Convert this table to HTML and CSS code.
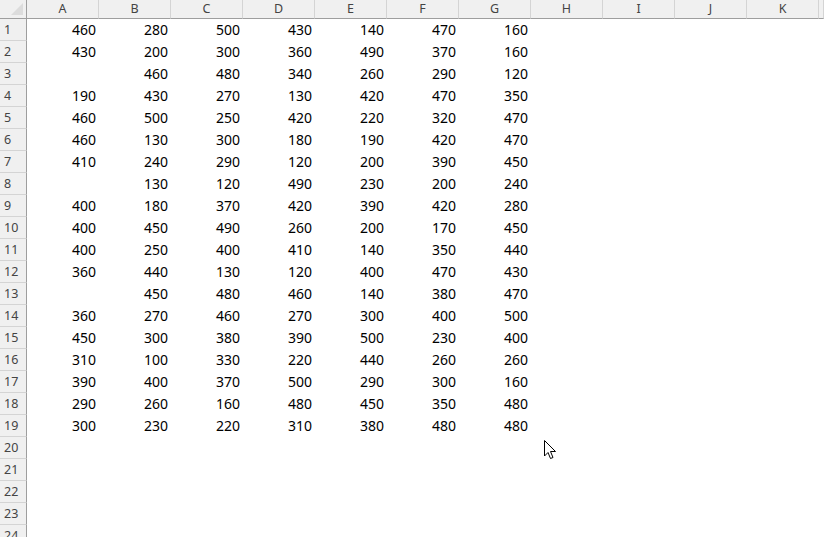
FILE: index.html
```html
<!DOCTYPE html>
<html>
<head>
<meta charset="utf-8">
<link rel="stylesheet" href="styles.css">
</head>
<body>
<div class="sheet" id="sheet"></div>
<svg class="cursor" width="14" height="22" viewBox="0 0 14 22"><path d="M1.5 1.5 L1.5 17 L5 13.5 L7.5 19.5 L10 18.5 L7.5 12.5 L12.5 12.5 Z" fill="#fff" stroke="#000" stroke-width="1" stroke-linejoin="miter"/></svg>
<script src="app.js"></script>
</body>
</html>
```
FILE: app.js
```js
const data = [
[460,280,500,430,140,470,160],
[430,200,300,360,490,370,160],
['',460,480,340,260,290,120],
[190,430,270,130,420,470,350],
[460,500,250,420,220,320,470],
[460,130,300,180,190,420,470],
[410,240,290,120,200,390,450],
['',130,120,490,230,200,240],
[400,180,370,420,390,420,280],
[400,450,490,260,200,170,450],
[400,250,400,410,140,350,440],
[360,440,130,120,400,470,430],
['',450,480,460,140,380,470],
[360,270,460,270,300,400,500],
[450,300,380,390,500,230,400],
[310,100,330,220,440,260,260],
[390,400,370,500,290,300,160],
[290,260,160,480,450,350,480],
[300,230,220,310,380,480,480]
];
const cols = ['A','B','C','D','E','F','G','H','I','J','K',''];
const sheet = document.getElementById('sheet');
let html = '<div class="corner"><span class="tri"></span></div>';
cols.forEach(c => { html += '<div class="colhead">' + c + '</div>'; });
for (let r = 1; r <= 24; r++) {
  html += '<div class="rowhead">' + r + '</div>';
  const row = data[r - 1] || [];
  for (let c = 0; c < 12; c++) {
    const v = row[c] !== undefined ? row[c] : '';
    html += '<div class="cell">' + v + '</div>';
  }
}
sheet.innerHTML = html;
```
FILE: styles.css
```css
html, body {
  margin: 0;
  padding: 0;
  background: #fff;
  overflow: hidden;
}
body {
  width: 824px;
  height: 537px;
  position: relative;
  font-family: "Noto Sans", "Open Sans", sans-serif;
}
.sheet {
  display: grid;
  grid-template-columns: 27px repeat(10, 72px) 72px 1fr;
  grid-template-rows: 19px repeat(24, 22px);
}
.corner {
  background: #f0f0f0;
  border-right: 1px solid #9e9e9e;
  border-bottom: 1px solid #9e9e9e;
  position: relative;
  box-sizing: border-box;
}
.tri {
  position: absolute;
  right: 3px;
  bottom: 3px;
  width: 0;
  height: 0;
  border-left: 12px solid transparent;
  border-bottom: 12px solid #dcdcdc;
}
.colhead {
  background: #f0f0f0;
  border-right: 1px solid #d4d4d4;
  border-bottom: 1px solid #9e9e9e;
  box-sizing: border-box;
  color: #444;
  font-size: 12.5px;
  text-align: center;
  line-height: 17px;
}
.rowhead {
  background: #f0f0f0;
  border-right: 1px solid #9e9e9e;
  border-bottom: 1px solid #d4d4d4;
  box-sizing: border-box;
  color: #444;
  font-size: 12.5px;
  line-height: 21px;
  padding-left: 4px;
}
.cell {
  text-align: right;
  padding-right: 3px;
  font-size: 14px;
  line-height: 21px;
  color: #000;
  white-space: nowrap;
}
.cursor {
  position: absolute;
  left: 543px;
  top: 439px;
}
```
